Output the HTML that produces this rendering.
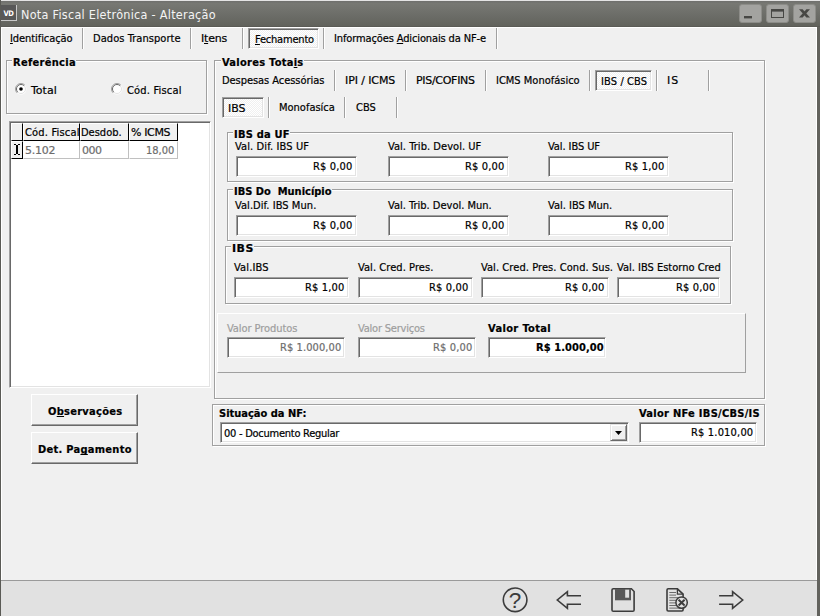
<!DOCTYPE html>
<html lang="pt-BR">
<head>
<meta charset="utf-8">
<title>Nota Fiscal Eletrônica - Alteração</title>
<style>
*{box-sizing:border-box}
html,body{margin:0;padding:0}
body{width:820px;height:616px;overflow:hidden;position:relative;background:#f0f0f0;
 font-family:"DejaVu Sans Condensed","Liberation Sans",sans-serif;font-size:11px;color:#000;line-height:13px}
.a{position:absolute;white-space:pre}
.b{font-weight:bold}
u{text-decoration:underline;text-underline-offset:1px;text-decoration-skip-ink:none;text-decoration-thickness:1px}
#title{left:0;top:0;width:820px;height:27px;background:linear-gradient(#6f6f6d 0,#777873 10%,#6d6e69 50%,#62635d 94%,#575752 100%);border-top:1px solid #e4e4e4}
#lb{left:0;top:0;width:1px;height:616px;background:#5a5a55}
#lb2{left:1px;top:27px;width:1px;height:553px;background:#fff}
#rb{left:817px;top:27px;width:3px;height:589px;background:#62625d}
#rb2{left:816px;top:27px;width:1px;height:553px;background:#fff}
#tl{left:1px;top:27px;width:816px;height:1px;background:#fff}
#ttext{left:21px;top:7px;font-size:12.5px;line-height:16px;color:#f4f4f4;letter-spacing:0.28px}
#icon{left:1px;top:5px;width:16px;height:16px;background:#585858;border-right:1px solid #c8c8c8;border-bottom:1px solid #c8c8c8;color:#fff;font-size:7.5px;font-weight:bold;line-height:18px;text-align:center;letter-spacing:-0.5px}
.wb{top:4px;width:23px;height:19px;border-radius:3px;background:#a3a3a0;border:1px solid #8c8c88}
.sep{width:1px;background:#a0a0a0;border:0;height:21px}
.sep:after{content:"";position:absolute;left:1px;top:0;width:1px;height:100%;background:#fff}
.sel{border:1px solid;border-color:#a0a0a0 #fff #fff #a0a0a0;box-shadow:inset 1px 1px 0 #696969, inset -1px -1px 0 #e3e3e3;background:#f7f7f7 conic-gradient(#fff 25%,#f0f0f0 0 50%,#fff 0 75%,#f0f0f0 0) 0 0/2px 2px;height:21px}
.grp{border:1px solid #a0a0a0;box-shadow:1px 1px 0 #fff, inset 1px 1px 0 #fff}
.gl{font-weight:bold}
.gl:before{content:"";position:absolute;left:-1px;right:0;top:3px;height:4px;background:#f0f0f0;z-index:-1}
.inp{background:#fff;border:1px solid;border-color:#a0a0a0 #fff #fff #a0a0a0;box-shadow:inset 1px 1px 0 #696969,inset -1px -1px 0 #e3e3e3;height:21px}
.dis{color:#9e9e9e}
.dv{color:#6d6d6d}
.btn{border:1px solid;border-color:#fff #696969 #696969 #fff;box-shadow:inset -1px -1px 0 #a0a0a0,inset 1px 1px 0 #f0f0f0;background:#f0f0f0;width:107px;height:32px}
#bar{left:1px;top:580px;width:816px;height:36px;background:#e1e1e1;border-top:1px solid #9a9a9a}
.hc{background:#f0f0f0;border:1px solid;border-color:#fff #000 #000 #fff;height:18px;top:123px}
.dc{background:#fff;border:1px solid;border-color:#fff #c0c0c0 #c0c0c0 #fff;height:18px;top:141px}
.w{font-family:"DejaVu Sans","Liberation Sans",sans-serif}
.t{z-index:2;-webkit-text-stroke:0.2px}
</style>
</head>
<body>
<div class="a" id="title"></div>
<div class="a" id="icon">VD</div>
<div class="a" id="ttext">Nota Fiscal Eletrônica - Alteração</div>
<div class="a wb" style="left:739px"></div>
<div class="a wb" style="left:766px"></div>
<div class="a wb" style="left:793px"></div>
<svg class="a" style="left:739px;top:4px" width="77" height="19" viewBox="0 0 77 19">
<rect x="5" y="12" width="8" height="2.4" fill="#474744"/>
<rect x="32.5" y="6.5" width="12" height="7" fill="none" stroke="#474744" stroke-width="1"/>
<rect x="32" y="5" width="13" height="2.6" fill="#474744"/>
<path d="M60 5.2 H63.6 L71 13.6 H67.4 Z" fill="#474744"/><path d="M71 5.2 H67.4 L60 13.6 H63.6 Z" fill="#474744"/>
</svg>
<div class="a" id="tl"></div>
<div class="a" id="lb"></div><div class="a" id="lb2"></div>
<div class="a" id="rb"></div><div class="a" id="rb2"></div>

<!-- main tabs -->
<div class="a sep" style="left:82px;top:28px"></div>
<div class="a sep" style="left:190px;top:28px"></div>
<div class="a sep" style="left:242px;top:28px"></div>
<div class="a sel" style="left:248px;top:28px;width:71px"></div>
<div class="a sep" style="left:323px;top:28px"></div>
<div class="a sep" style="left:496px;top:28px"></div>

<!-- Referencia -->
<div class="a grp" style="left:6px;top:60px;width:201px;height:54px"></div>
<svg class="a" style="left:15px;top:83px" width="12" height="12" viewBox="0 0 12 12">
<circle cx="6" cy="6" r="5.5" fill="#fff"/>
<path d="M2.1 9.9 A5.5 5.5 0 0 1 9.9 2.1" fill="none" stroke="#a0a0a0" stroke-width="1"/>
<path d="M2.8 9.2 A4.5 4.5 0 0 1 9.2 2.8" fill="none" stroke="#696969" stroke-width="1"/>
<path d="M9.2 2.8 A4.5 4.5 0 0 1 2.8 9.2" fill="none" stroke="#e3e3e3" stroke-width="1"/>
<circle cx="6" cy="6" r="1.8" fill="#000"/>
</svg>
<svg class="a" style="left:111px;top:83px" width="12" height="12" viewBox="0 0 12 12">
<circle cx="6" cy="6" r="5.5" fill="#fff"/>
<path d="M2.1 9.9 A5.5 5.5 0 0 1 9.9 2.1" fill="none" stroke="#a0a0a0" stroke-width="1"/>
<path d="M2.8 9.2 A4.5 4.5 0 0 1 9.2 2.8" fill="none" stroke="#696969" stroke-width="1"/>
<path d="M9.2 2.8 A4.5 4.5 0 0 1 2.8 9.2" fill="none" stroke="#e3e3e3" stroke-width="1"/>
</svg>

<!-- grid -->
<div class="a" style="left:9px;top:121px;width:202px;height:267px;background:#fff;border:1px solid;border-color:#a0a0a0 #fff #fff #a0a0a0;box-shadow:inset 1px 1px 0 #696969,inset -1px -1px 0 #e3e3e3"></div>
<div class="a hc" style="left:11px;width:12px"></div>
<div class="a hc" style="left:23px;width:57px"></div>
<div class="a hc" style="left:80px;width:49px"></div>
<div class="a hc" style="left:129px;width:49px"></div>
<div class="a hc" style="left:11px;width:12px;top:141px;height:18px"></div>
<svg class="a" style="left:14px;top:144px" width="6" height="11" viewBox="0 0 6 11" shape-rendering="crispEdges"><path d="M0 0h2v1h-2z M4 0h2v1h-2z M2 1h2v9h-2z M0 10h2v1h-2z M4 10h2v1h-2z" fill="#000"/></svg>
<div class="a dc" style="left:23px;width:57px"></div>
<div class="a dc" style="left:80px;width:49px"></div>
<div class="a dc" style="left:129px;width:49px"></div>

<!-- buttons -->
<div class="a btn" style="left:31px;top:394px"></div>
<div class="a btn" style="left:31px;top:432px"></div>

<!-- Valores Totais -->
<div class="a grp" style="left:214px;top:60px;width:551px;height:339px"></div>

<!-- tabs row 2 -->
<div class="a sep" style="left:334px;top:70px"></div>
<div class="a sep" style="left:405px;top:70px"></div>
<div class="a sep" style="left:485px;top:70px"></div>
<div class="a sep" style="left:589px;top:70px"></div>
<div class="a sel" style="left:595px;top:70px;width:57px"></div>
<div class="a sep" style="left:656px;top:70px"></div>
<div class="a sep" style="left:708px;top:70px"></div>
<!-- tabs row 3 -->
<div class="a sel" style="left:222px;top:97px;width:42px"></div>
<div class="a sep" style="left:268px;top:97px"></div>
<div class="a sep" style="left:344px;top:97px"></div>
<div class="a sep" style="left:396px;top:97px"></div>

<!-- IBS da UF -->
<div class="a grp" style="left:227px;top:132px;width:506px;height:50px"></div>
<div class="a inp" style="left:236px;top:156px;width:121px"></div>
<div class="a inp" style="left:388px;top:156px;width:121px"></div>
<div class="a inp" style="left:548px;top:156px;width:121px"></div>

<!-- IBS Do Municipio -->
<div class="a grp" style="left:227px;top:189px;width:506px;height:52px"></div>
<div class="a inp" style="left:236px;top:215px;width:121px"></div>
<div class="a inp" style="left:388px;top:215px;width:121px"></div>
<div class="a inp" style="left:548px;top:215px;width:121px"></div>

<!-- IBS -->
<div class="a grp" style="left:225px;top:246px;width:506px;height:58px"></div>
<div class="a inp" style="left:234px;top:277px;width:115px"></div>
<div class="a inp" style="left:358px;top:277px;width:115px"></div>
<div class="a inp" style="left:481px;top:277px;width:128px"></div>
<div class="a inp" style="left:617px;top:277px;width:103px"></div>

<!-- totals panel -->
<div class="a" style="left:217px;top:313px;width:529px;height:60px;border:1px solid;border-color:#fff #a0a0a0 #a0a0a0 #fff"></div>
<div class="a inp" style="left:227px;top:337px;width:118px"></div>
<div class="a inp" style="left:358px;top:337px;width:118px"></div>
<div class="a inp" style="left:488px;top:337px;width:118px"></div>

<!-- situacao -->
<div class="a grp" style="left:212px;top:404px;width:553px;height:42px"></div>
<div class="a inp" style="left:220px;top:422px;width:409px"></div>
<div class="a" style="left:610px;top:424px;width:17px;height:17px;background:#f0f0f0;border:1px solid;border-color:#e3e3e3 #696969 #696969 #e3e3e3;box-shadow:inset 1px 1px 0 #fff,inset -1px -1px 0 #a0a0a0"></div>
<svg class="a" style="left:615px;top:431px" width="7" height="4" viewBox="0 0 7 4"><path d="M0 0 H7 L3.5 4 Z" fill="#000"/></svg>
<div class="a inp" style="left:639px;top:422px;width:118px"></div>

<div id="ident" class="a t " style="left:10.00px;top:32px;letter-spacing:-0.075px"><u>I</u>dentificação</div>
<div id="dados" class="a t " style="left:93.00px;top:32px;letter-spacing:0.060px">Dados Transporte</div>
<div id="itens" class="a t w" style="left:201.00px;top:32px;letter-spacing:-0.225px">I<u>t</u>ens</div>
<div id="fech" class="a t " style="left:255.00px;top:33px;letter-spacing:-0.200px"><u>F</u>echamento</div>
<div id="info" class="a t " style="left:334.00px;top:32px;letter-spacing:-0.124px">Informações <u>A</u>dicionais da NF-e</div>
<div id="ref" class="a t gl" style="left:13.00px;top:56px;letter-spacing:0.300px">Referência</div>
<div id="total" class="a t w" style="left:31.00px;top:84px;letter-spacing:0.000px">Total</div>
<div id="codf" class="a t " style="left:127.00px;top:84px;letter-spacing:0.180px">Cód. Fiscal</div>
<div id="valtot" class="a t gl" style="left:222.00px;top:56px;letter-spacing:0.277px">Valores Tota<u>i</u>s</div>
<div id="desp" class="a t " style="left:222.00px;top:74px;letter-spacing:-0.050px">Despesas Acessórias</div>
<div id="ipi" class="a t w" style="left:345.00px;top:74px;letter-spacing:-0.100px">IPI / ICMS</div>
<div id="pis" class="a t w" style="left:416.00px;top:74px;letter-spacing:-0.300px">PIS/COFINS</div>
<div id="icmsm" class="a t " style="left:496.00px;top:74px;letter-spacing:0.000px">ICMS Monofásico</div>
<div id="ibscbs" class="a t " style="left:601.00px;top:75px;letter-spacing:0.113px">IBS / CBS</div>
<div id="is" class="a t w" style="left:667.00px;top:74px;letter-spacing:0.900px">IS</div>
<div id="ibs" class="a t w" style="left:228.00px;top:102px;letter-spacing:0.000px">IBS</div>
<div id="mono" class="a t " style="left:279.00px;top:101px;letter-spacing:0.000px">Monofasíca</div>
<div id="cbs" class="a t " style="left:356.00px;top:101px;letter-spacing:-0.000px">CBS</div>
<div id="ibsuf" class="a t gl" style="left:234.00px;top:128px;letter-spacing:0.225px">IBS da UF</div>
<div id="valdif" class="a t " style="left:235.00px;top:140px;letter-spacing:0.120px">Val. Dif. IBS UF</div>
<div id="valtrib" class="a t " style="left:388.00px;top:140px;letter-spacing:0.047px">Val. Trib. Devol. UF</div>
<div id="valibsuf" class="a t " style="left:548.00px;top:140px;letter-spacing:-0.090px">Val. IBS UF</div>
<div id="ibsmun" class="a t gl" style="left:234.00px;top:185px;letter-spacing:0.000px">IBS Do  Município</div>
<div id="valdifm" class="a t " style="left:235.00px;top:199px;letter-spacing:0.056px">Val.Dif. IBS Mun.</div>
<div id="vtm" class="a t " style="left:388.00px;top:199px;letter-spacing:0.000px">Val. Trib. Devol. Mun.</div>
<div id="vim" class="a t " style="left:548.00px;top:199px;letter-spacing:0.000px">Val. IBS Mun.</div>
<div id="ibs3" class="a t gl w" style="left:232.00px;top:242px;letter-spacing:0.450px">IBS</div>
<div id="valibs" class="a t " style="left:234.00px;top:261px;letter-spacing:0.150px">Val.IBS</div>
<div id="vcp" class="a t " style="left:358.00px;top:261px;letter-spacing:0.060px">Val. Cred. Pres.</div>
<div id="vcpcs" class="a t " style="left:481.00px;top:261px;letter-spacing:0.069px">Val. Cred. Pres. Cond. Sus.</div>
<div id="viec" class="a t " style="left:617.00px;top:261px;letter-spacing:0.000px">Val. IBS Estorno Cred</div>
<div id="vprod" class="a t dis" style="left:227.00px;top:322px;letter-spacing:-0.069px">Valor Produtos</div>
<div id="vserv" class="a t dis" style="left:358.00px;top:322px;letter-spacing:-0.208px">Valor Serviços</div>
<div id="vtot" class="a t b" style="left:488.00px;top:322px;letter-spacing:0.360px">Valor Total</div>
<div id="sit" class="a t b" style="left:219.00px;top:407px;letter-spacing:0.000px">Situação da NF:</div>
<div id="doc" class="a t " style="left:224.00px;top:427px;letter-spacing:-0.257px">00 - Documento Regular</div>
<div id="vnfe" class="a t b" style="left:639.00px;top:407px;letter-spacing:0.284px">Valor NFe IBS/CBS/IS</div>
<div id="v11" class="a t " style="left:313.00px;top:160px;letter-spacing:0.150px">R$ 0,00</div>
<div id="v12" class="a t " style="left:465.00px;top:160px;letter-spacing:0.150px">R$ 0,00</div>
<div id="v13" class="a t " style="left:625.00px;top:160px;letter-spacing:0.150px">R$ 1,00</div>
<div id="v21" class="a t " style="left:313.00px;top:219px;letter-spacing:0.150px">R$ 0,00</div>
<div id="v22" class="a t " style="left:465.00px;top:219px;letter-spacing:0.150px">R$ 0,00</div>
<div id="v23" class="a t " style="left:625.00px;top:219px;letter-spacing:0.150px">R$ 0,00</div>
<div id="v31" class="a t " style="left:305.00px;top:281px;letter-spacing:0.150px">R$ 1,00</div>
<div id="v32" class="a t " style="left:429.00px;top:281px;letter-spacing:0.150px">R$ 0,00</div>
<div id="v33" class="a t " style="left:565.00px;top:281px;letter-spacing:0.150px">R$ 0,00</div>
<div id="v34" class="a t " style="left:676.00px;top:281px;letter-spacing:0.150px">R$ 0,00</div>
<div id="vp1" class="a t dv" style="left:280.00px;top:341px;letter-spacing:0.090px">R$ 1.000,00</div>
<div id="vp2" class="a t dv" style="left:433.00px;top:341px;letter-spacing:0.150px">R$ 0,00</div>
<div id="vp3" class="a t b" style="left:536.00px;top:341px;letter-spacing:0.090px">R$ 1.000,00</div>
<div id="vn" class="a t " style="left:691.00px;top:426px;letter-spacing:0.180px">R$ 1.010,00</div>
<div id="obs" class="a t b" style="left:48.00px;top:405px;letter-spacing:0.270px">O<u>b</u>servações</div>
<div id="det" class="a t b" style="left:38.00px;top:443px;letter-spacing:0.277px">Det. Pa<u>g</u>amento</div>
<div id="hcod" class="a t " style="left:25.00px;top:126px;letter-spacing:0.180px">Cód. Fiscal</div>
<div id="hdes" class="a t " style="left:81.00px;top:126px;letter-spacing:0.000px">Desdob.</div>
<div id="hicms" class="a t w" style="left:131.00px;top:126px;letter-spacing:-0.360px">% ICMS</div>
<div id="d5102" class="a t dv w" style="left:25.00px;top:144px;letter-spacing:-0.225px">5.102</div>
<div id="d000" class="a t dv w" style="left:82.00px;top:144px;letter-spacing:-0.450px">000</div>
<div id="d18" class="a t dv" style="left:146.00px;top:144px;letter-spacing:0.000px">18,00</div>

<div class="a" id="bar"></div>
<svg class="a" style="left:0;top:580px" width="820" height="36" viewBox="0 580 820 36">
<g fill="none" stroke="#3c3c3c" stroke-width="1.6">
<circle cx="515.1" cy="599.8" r="11.8"/>
<path d="M581 595.8 H567.4 V591.6 L557.3 600 L567.4 608.4 V604.2 H581"/>
<path d="M719.1 595.8 H732.6 V591.6 L742.7 600 L732.6 608.4 V604.2 H719.1"/>
<path d="M613.3 588.8 H631.4 L634.1 591.5 V610 a1.3 1.3 0 0 1 -1.3 1.3 H613.3 a1.3 1.3 0 0 1 -1.3 -1.3 V590.1 a1.3 1.3 0 0 1 1.3 -1.3 z"/>
<path d="M668.2 588.8 H677.4 L683.1 594.2 V609.8 a1.2 1.2 0 0 1 -1.2 1.2 H668.2 a1.2 1.2 0 0 1 -1.2 -1.2 V590 a1.2 1.2 0 0 1 1.2 -1.2 z"/>
<path d="M677.4 588.8 V594.2 H683.1" stroke-width="1.3"/>
</g>
<rect x="615" y="588.8" width="16" height="11.5" fill="#595959"/>
<rect x="625.2" y="589.7" width="3.9" height="8" fill="#e1e1e1"/>
<g stroke="#6a6a6a" stroke-width="1" fill="none">
<path d="M669.3 592.5 H676 M669.3 595.1 H676 M669.3 597.7 H682 M669.3 600.3 H680 M669.3 602.9 H680 M669.3 605.5 H680 M669.3 608.1 H682"/>
</g>
<circle cx="681.6" cy="602.6" r="5.7" fill="#e1e1e1" stroke="#3c3c3c" stroke-width="1.5"/>
<path d="M678.6 599.8 L684.6 605.4 M684.6 599.8 L678.6 605.4" stroke="#3c3c3c" stroke-width="2" fill="none"/>
<text x="515" y="608.2" text-anchor="middle" font-family="Liberation Sans, sans-serif" font-size="22.5" fill="#3c3c3c">?</text>
</svg>
</body>
</html>
